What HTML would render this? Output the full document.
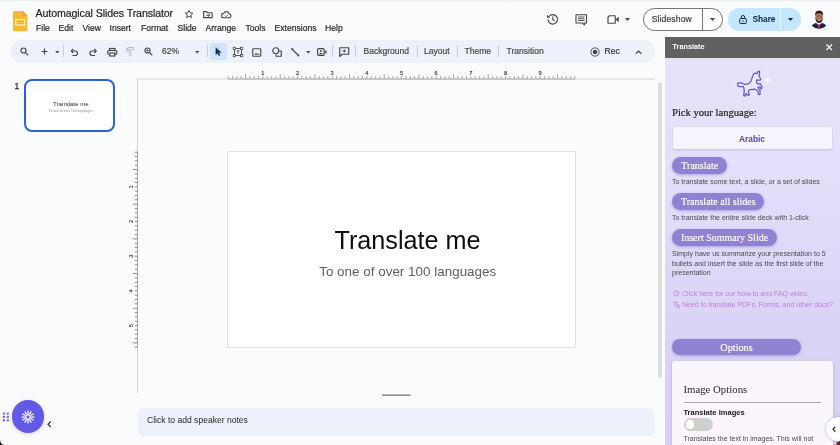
<!DOCTYPE html>
<html lang="en">
<head>
<meta charset="utf-8">
<title>Automagical Slides Translator - Google Slides</title>
<style>
*{box-sizing:border-box;margin:0;padding:0}
html,body{width:840px;height:445px;overflow:hidden}
body{background:#f9fbfd;font-family:"Liberation Sans",Arial,sans-serif;color:#1f1f1f;position:relative}
.abs{position:absolute}
.t{position:absolute;white-space:nowrap;line-height:1}
svg{position:absolute;overflow:visible}
#topband{left:0;top:0;width:840px;height:2px;background:linear-gradient(180deg,#f1f2f4 0,#f3f4f6 70%,#f7f8fa 100%)}
#topband2{left:0;top:5px;width:840px;height:3px;background:linear-gradient(180deg,#f9fbfd 0,#fdfdfe 50%,#f9fbfd 100%)}
/* header */
#doctitle{left:35.600px;top:8.200px;font-size:10.620px;color:#1f1f1f;letter-spacing:-0.100px;-webkit-text-stroke:.2px #1f1f1f}
.menu{top:23.600px;font-size:8.600px;color:#1f1f1f;-webkit-text-stroke:.18px #1f1f1f}
/* toolbar */
#toolbar{left:10px;top:40px;width:645px;height:22.5px;border-radius:12px;background:#edf2fa}
.sep{position:absolute;top:45px;width:1px;height:12px;background:#c9ccd1}
.tb{top:47px;font-size:8.550px;color:#444746;-webkit-text-stroke:.18px #444746}
/* filmstrip */
#thumb{left:24px;top:78.600px;width:91px;height:53.600px;border:2px solid #2f60d8;border-radius:8px;background:#fff}
/* canvas */
#slide{left:227px;top:151px;width:349px;height:197px;background:#fff;border:1px solid #e0e2e6}
#notes{left:137.700px;top:408px;width:517.300px;height:28px;border-radius:5px;background:#edf2fa}
/* sidebar */
#sb{left:665px;top:37px;width:175px;height:408px;background:linear-gradient(180deg,#e8e4fc 0%,#e3defa 35%,#dad4f6 70%,#d8d1f5 100%)}
#sbhead{left:665px;top:37px;width:175px;height:20.500px;background:#616161}
.serif{font-family:"Liberation Serif","DejaVu Serif",serif}
.pill{position:absolute;background:#9181d3;border-radius:10px;color:#fff;box-shadow:0 1px 3px rgba(80,60,160,.35)}
.desc{font-size:7.030px;color:#4a4a4a;line-height:9.270px;white-space:nowrap;position:absolute}
.lnk{font-size:7.030px;color:#c17be2;white-space:nowrap;position:absolute;line-height:1}
</style>
</head>
<body>
<div id="root" style="position:absolute;left:0;top:0;width:840px;height:445px;will-change:transform">
<div class="abs" id="topband"></div>
<div class="abs" id="topband2"></div>

<!-- Slides logo -->
<svg style="left:12.6px;top:10.8px" width="14.4" height="20.2" viewBox="0 0 14.4 20.2">
  <path d="M1.4 0H9.6L14.4 4.8V18.8Q14.4 20.2 13 20.2H1.4Q0 20.2 0 18.8V1.4Q0 0 1.4 0Z" fill="#f5ba2e"/>
  <path d="M9.6 0L14.4 4.8H10.8Q9.6 4.8 9.6 3.6Z" fill="#f29a1f"/>
  <rect x="2.9" y="8.6" width="8.6" height="5.4" fill="none" stroke="#fff" stroke-width="1"/>
</svg>

<div class="t" id="doctitle">Automagical Slides Translator</div>

<!-- title icons -->
<svg style="left:184px;top:8.700px" width="10" height="10" viewBox="0 0 24 24"><path d="M12 3.2l2.7 6 6.5.6-4.9 4.3 1.5 6.4L12 17.1l-5.8 3.4 1.5-6.4-4.9-4.3 6.5-.6z" fill="none" stroke="#444746" stroke-width="2.300" stroke-linejoin="round"/></svg>
<svg style="left:203px;top:11px" width="10" height="8" viewBox="0 0 10 8"><path d="M.6 .6h2.900l1 1.100h4.700v4.900H.6z" fill="none" stroke="#444746" stroke-width="1.100" stroke-linejoin="round"/><path d="M3.200 4.300h3.400M5.400 2.900l1.400 1.400-1.400 1.400" fill="none" stroke="#444746" stroke-width=".95"/></svg>
<svg style="left:221px;top:11px" width="11" height="7.500" viewBox="0 0 11 7.500"><path d="M2.900 6.800a2.200 2.200 0 0 1-.2-4.400A2.900 2.900 0 0 1 8.200 2.900 2 2 0 0 1 8.500 6.800z" fill="none" stroke="#444746" stroke-width="1.100" stroke-linejoin="round"/><path d="M4 4.600l1 1 2-2" fill="none" stroke="#444746" stroke-width=".9"/></svg>

<!-- menus -->
<div class="t menu" style="left:36px">File</div>
<div class="t menu" style="left:58.5px">Edit</div>
<div class="t menu" style="left:82.500px">View</div>
<div class="t menu" style="left:109.500px">Insert</div>
<div class="t menu" style="left:141px">Format</div>
<div class="t menu" style="left:177.500px">Slide</div>
<div class="t menu" style="left:205.500px">Arrange</div>
<div class="t menu" style="left:245.500px">Tools</div>
<div class="t menu" style="left:274.500px">Extensions</div>
<div class="t menu" style="left:325px">Help</div>

<!-- right header icons -->
<svg style="left:545.5px;top:13px" width="13" height="12" viewBox="0 0 26 24"><path d="M5.500 7.500A9.500 9.500 0 1 1 4 13" fill="none" stroke="#444746" stroke-width="2.300"/><path d="M2 3.500v6h6z" fill="#444746"/><path d="M13.500 7v6l4 2.500" fill="none" stroke="#444746" stroke-width="2.200"/></svg>
<svg style="left:574.500px;top:13.500px" width="12.500" height="11.500" viewBox="0 0 25 23"><path d="M2 1.500h21v16.500h-4v4l-4-4H2z" fill="none" stroke="#444746" stroke-width="2.200" stroke-linejoin="round"/><path d="M6 6h13M6 9.500h13M6 13h13" stroke="#444746" stroke-width="1.800"/></svg>
<svg style="left:606.500px;top:15px" width="12.500" height="9" viewBox="0 0 25 18"><path d="M5 1.500h11.500v15H2V4.500z" fill="none" stroke="#444746" stroke-width="2.300" stroke-linejoin="round"/><path d="M17 9l6.500-5.500v11z" fill="#444746"/></svg>
<svg style="left:624.500px;top:17.500px" width="5" height="3" viewBox="0 0 10 6"><path d="M0 0h10L5 6z" fill="#444746"/></svg>

<!-- Slideshow button -->
<div class="abs" style="left:642.500px;top:7.500px;width:80px;height:23.500px;border:1px solid #747775;border-radius:12px;background:#fdfdfe"></div>
<div class="abs" style="left:702px;top:8px;width:1px;height:22.500px;background:#747775"></div>
<div class="t" style="left:651.700px;top:14.500px;font-size:8.650px;color:#3c3f3e;letter-spacing:.100px;-webkit-text-stroke:.2px #3c3f3e">Slideshow</div>
<svg style="left:709.500px;top:17.500px" width="5" height="3" viewBox="0 0 10 6"><path d="M0 0h10L5 6z" fill="#444746"/></svg>

<!-- Share button -->
<div class="abs" style="left:728px;top:7.500px;width:72.500px;height:23.500px;border-radius:12px;background:#c2e7ff"></div>
<div class="abs" style="left:780px;top:7.500px;width:1px;height:23.500px;background:#e3f3ff"></div>
<svg style="left:739px;top:14.500px" width="8" height="9" viewBox="0 0 16 18"><rect x="1.500" y="7" width="13" height="10" rx="1.500" fill="none" stroke="#1f2a37" stroke-width="2"/><path d="M4.500 7V4.500a3.500 3.500 0 0 1 7 0V7" fill="none" stroke="#1f2a37" stroke-width="2"/><circle cx="8" cy="12" r="1.500" fill="#1f2a37"/></svg>
<div class="t" style="left:752.500px;top:14.600px;font-size:8.350px;font-weight:bold;color:#0b2540;letter-spacing:-.050px">Share</div>
<svg style="left:788px;top:17.500px" width="5" height="3" viewBox="0 0 10 6"><path d="M0 0h10L5 6z" fill="#0b2540"/></svg>

<!-- avatar -->
<svg style="left:800px;top:4px" width="40" height="30" viewBox="0 0 593 445">
  <defs><clipPath id="avc"><circle cx="282" cy="215" r="152"/></clipPath></defs>
  <g clip-path="url(#avc)">
    <circle cx="282" cy="215" r="152" fill="#fbfbfd"/>
    <path d="M150 400Q160 300 235 280L282 300 330 280Q400 300 415 400Z" fill="#1b234f"/>
    <path d="M250 283L282 330 316 283 300 275H265Z" fill="#eef0f6"/>
    <path d="M272 300h22l6 75h-34z" fill="#c8232f"/>
    <ellipse cx="283" cy="195" rx="56" ry="82" fill="#b07a58"/>
    <path d="M224 185Q215 95 283 95T343 185Q335 140 283 138T224 185Z" fill="#2a1d1a"/>
    <path d="M228 200Q232 280 283 282T338 200Q325 245 283 243T228 200Z" fill="#3b2721"/>
    <path d="M258 236Q283 262 308 236Q283 246 258 236Z" fill="#fff"/>
    <path d="M250 178h24M292 178h24" stroke="#2a1d1a" stroke-width="9"/><circle cx="262" cy="194" r="6" fill="#2a1d1a"/><circle cx="304" cy="194" r="6" fill="#2a1d1a"/>
  </g>
</svg>

<!-- toolbar -->
<div class="abs" id="toolbar"></div>
<div class="abs" style="left:210px;top:42.500px;width:17px;height:17.500px;border-radius:3px;background:#d3e3fd"></div>
<!-- search -->
<svg style="left:20.200px;top:46.500px" width="9" height="9" viewBox="0 0 18 18"><circle cx="7" cy="7" r="5" fill="none" stroke="#444746" stroke-width="2.300"/><path d="M10.800 10.800L16.500 16.500" stroke="#444746" stroke-width="2.200"/></svg>
<!-- plus -->
<svg style="left:41px;top:47.500px" width="7" height="7" viewBox="0 0 14 14"><path d="M7 1v12M1 7h12" stroke="#444746" stroke-width="2.300"/></svg>
<svg style="left:55px;top:50.500px" width="4.500" height="2.500" viewBox="0 0 10 6"><path d="M0 0h10L5 6z" fill="#444746"/></svg>
<div class="sep" style="left:63px"></div>
<!-- undo -->
<svg style="left:70.300px;top:47.500px" width="8.500" height="8.500" viewBox="0 0 17 17"><path d="M3 6h7.500a4.500 4.500 0 0 1 0 9H5" fill="none" stroke="#444746" stroke-width="2.300"/><path d="M6.500 2L2.500 6l4 4" fill="none" stroke="#444746" stroke-width="2.300"/></svg>
<!-- redo -->
<svg style="left:88.500px;top:47.500px" width="8.500" height="8.500" viewBox="0 0 17 17"><path d="M14 6H6.500a4.500 4.500 0 0 0 0 9H12" fill="none" stroke="#444746" stroke-width="2.300"/><path d="M10.500 2l4 4-4 4" fill="none" stroke="#444746" stroke-width="2.300"/></svg>
<!-- print -->
<svg style="left:106.500px;top:47.500px" width="10.500" height="8.500" viewBox="0 0 21 17"><rect x="5" y="1" width="11" height="4" fill="none" stroke="#444746" stroke-width="2.300"/><rect x="1.500" y="5" width="18" height="7.500" rx="2" fill="none" stroke="#444746" stroke-width="2.300"/><rect x="5.500" y="10" width="10" height="6" fill="#edf2fa" stroke="#444746" stroke-width="2.300"/></svg>
<!-- paint roller disabled -->
<svg style="left:126px;top:47px" width="8.500" height="9.500" viewBox="0 0 17 19"><rect x="3.500" y="1" width="12" height="4.500" rx="1" fill="none" stroke="#b4b7bb" stroke-width="2"/><path d="M3.500 3.200H1.500v5.500h7v3" fill="none" stroke="#b4b7bb" stroke-width="1.800"/><rect x="7" y="11.500" width="3" height="6.500" rx="1" fill="none" stroke="#b4b7bb" stroke-width="1.600"/></svg>
<!-- zoom -->
<svg style="left:144px;top:46.500px" width="9" height="9" viewBox="0 0 18 18"><circle cx="7" cy="7" r="5" fill="none" stroke="#444746" stroke-width="2.300"/><path d="M10.800 10.800L16.500 16.500" stroke="#444746" stroke-width="2.200"/><path d="M7 4.500v5M4.500 7h5" stroke="#444746" stroke-width="1.500"/></svg>
<div class="t tb" style="left:162px">62%</div>
<svg style="left:194.500px;top:50.500px" width="4.500" height="2.500" viewBox="0 0 10 6"><path d="M0 0h10L5 6z" fill="#444746"/></svg>
<div class="sep" style="left:207px"></div>
<!-- cursor -->
<svg style="left:215.300px;top:47.300px" width="6.900" height="9.500" viewBox="0 0 16 22"><path d="M2 1.500V17.500l4.200-3.800 2.800 6.300 2.500-1.100-2.800-6.200h5.800z" fill="#0b2a66" stroke="#0b2a66" stroke-width="1" stroke-linejoin="round"/></svg>
<!-- textbox -->
<svg style="left:232.500px;top:47px" width="10" height="10" viewBox="0 0 20 20"><rect x="3" y="3" width="14" height="14" fill="none" stroke="#444746" stroke-width="1.800"/><rect x="0.500" y="0.500" width="4.500" height="4.500" fill="#edf2fa" stroke="#444746" stroke-width="1.500"/><rect x="15" y="0.500" width="4.500" height="4.500" fill="#edf2fa" stroke="#444746" stroke-width="1.500"/><rect x="0.500" y="15" width="4.500" height="4.500" fill="#edf2fa" stroke="#444746" stroke-width="1.500"/><rect x="15" y="15" width="4.500" height="4.500" fill="#edf2fa" stroke="#444746" stroke-width="1.500"/><path d="M7 7.500h6M10 7.500v6" stroke="#444746" stroke-width="1.800"/></svg>
<!-- image -->
<svg style="left:252px;top:47.500px" width="9.500" height="9" viewBox="0 0 19 18"><rect x="1.500" y="1.500" width="16" height="15" rx="1.500" fill="none" stroke="#444746" stroke-width="2.300"/><path d="M4.500 13.500l3.500-4 2.500 3 2-2 2.500 3z" fill="#444746"/></svg>
<!-- shapes -->
<svg style="left:271.500px;top:47px" width="10" height="10" viewBox="0 0 20 20"><circle cx="7.500" cy="7.500" r="6" fill="none" stroke="#444746" stroke-width="2.300"/><path d="M14.500 8H18.500V18.500H8V14.800" fill="none" stroke="#444746" stroke-width="2.300"/></svg>
<!-- line -->
<svg style="left:291px;top:47.500px" width="8.500" height="8.500" viewBox="0 0 17 17"><path d="M2 2L15 15" stroke="#444746" stroke-width="2.600"/><circle cx="2.200" cy="2.200" r="2" fill="#444746"/><circle cx="14.800" cy="14.800" r="2" fill="#444746"/></svg>
<svg style="left:306px;top:50.500px" width="4.500" height="2.500" viewBox="0 0 10 6"><path d="M0 0h10L5 6z" fill="#444746"/></svg>
<!-- video speaker -->
<svg style="left:317px;top:48px" width="10" height="8" viewBox="0 0 20 16"><rect x="1.200" y="1.200" width="13" height="13.600" rx="2" fill="none" stroke="#444746" stroke-width="2.300"/><path d="M14.500 8L19 4v8z" fill="#444746"/><circle cx="7.700" cy="6" r="1.800" fill="#444746"/><path d="M4 12.300q0-3 3.700-3t3.700 3z" fill="#444746"/></svg>
<div class="sep" style="left:332.200px"></div>
<!-- add comment -->
<svg style="left:339px;top:47px" width="10.500" height="10" viewBox="0 0 21 20"><path d="M1.500 1.500h18v13h-13l-5 4.500z" fill="none" stroke="#444746" stroke-width="2.300" stroke-linejoin="round"/><path d="M10.500 4.500v7M7 8h7" stroke="#444746" stroke-width="1.800"/></svg>
<div class="sep" style="left:355px"></div>
<div class="t tb" style="left:363.500px">Background</div>
<div class="sep" style="left:417px"></div>
<div class="t tb" style="left:424px">Layout</div>
<div class="sep" style="left:456.500px"></div>
<div class="t tb" style="left:464.500px">Theme</div>
<div class="sep" style="left:498px"></div>
<div class="t tb" style="left:506.500px">Transition</div>
<!-- Rec -->
<svg style="left:589.500px;top:46.500px" width="10" height="10" viewBox="0 0 20 20"><circle cx="10" cy="10" r="8.200" fill="none" stroke="#444746" stroke-width="1.800"/><circle cx="10" cy="10" r="4.600" fill="#444746"/></svg>
<div class="t tb" style="left:604.500px;color:#1f1f1f">Rec</div>
<svg style="left:635px;top:49.500px" width="7" height="4.500" viewBox="0 0 14 9"><path d="M1.500 7.500L7 2l5.500 5.500" fill="none" stroke="#444746" stroke-width="2.300"/></svg>

<!-- filmstrip -->
<div class="t" style="left:14.500px;top:81.600px;font-size:8.400px;color:#1f1f1f;-webkit-text-stroke:.25px #1f1f1f">1</div>
<div class="abs" id="thumb"></div>
<div class="t" style="left:52.900px;top:100.800px;font-size:6.200px;color:#2a2a2a">Translate me</div>
<div class="t" style="left:48.800px;top:109.900px;font-size:3.350px;color:#8c8c8c">To one of over 100 languages</div>

<!-- rulers + canvas -->
<svg style="left:0;top:0" width="840" height="100" viewBox="0 0 840 100"><path d="M137 79H655" stroke="#d3d6da" stroke-width="1.100"/></svg>
<div class="abs" style="left:137px;top:79px;width:1px;height:314px;background:#d0d3d7"></div>
<svg style="left:0;top:0" width="840" height="445" viewBox="0 0 840 445"><path d="M228.20 78.700v-2.6M232.53 78.700v-2.6M236.87 78.700v-2.6M241.20 78.700v-2.6M245.53 78.700v-4.6M249.87 78.700v-2.6M254.20 78.700v-2.6M258.54 78.700v-2.6M262.87 78.700v-2.6M267.20 78.700v-2.6M271.54 78.700v-2.6M275.87 78.700v-2.6M280.20 78.700v-4.6M284.54 78.700v-2.6M288.87 78.700v-2.6M293.21 78.700v-2.6M297.54 78.700v-2.6M301.87 78.700v-2.6M306.21 78.700v-2.6M310.54 78.700v-2.6M314.88 78.700v-4.6M319.21 78.700v-2.6M323.54 78.700v-2.6M327.88 78.700v-2.6M332.21 78.700v-2.6M336.54 78.700v-2.6M340.88 78.700v-2.6M345.21 78.700v-2.6M349.54 78.700v-4.6M353.88 78.700v-2.6M358.21 78.700v-2.6M362.55 78.700v-2.6M366.88 78.700v-2.6M371.21 78.700v-2.6M375.55 78.700v-2.6M379.88 78.700v-2.6M384.22 78.700v-4.6M388.55 78.700v-2.6M392.88 78.700v-2.6M397.22 78.700v-2.6M401.55 78.700v-2.6M405.88 78.700v-2.6M410.22 78.700v-2.6M414.55 78.700v-2.6M418.88 78.700v-4.6M423.22 78.700v-2.6M427.55 78.700v-2.6M431.89 78.700v-2.6M436.22 78.700v-2.6M440.55 78.700v-2.6M444.89 78.700v-2.6M449.22 78.700v-2.6M453.56 78.700v-4.6M457.89 78.700v-2.6M462.22 78.700v-2.6M466.56 78.700v-2.6M470.89 78.700v-2.6M475.22 78.700v-2.6M479.56 78.700v-2.6M483.89 78.700v-2.6M488.23 78.700v-4.6M492.56 78.700v-2.6M496.89 78.700v-2.6M501.23 78.700v-2.6M505.56 78.700v-2.6M509.89 78.700v-2.6M514.23 78.700v-2.6M518.56 78.700v-2.6M522.89 78.700v-4.6M527.23 78.700v-2.6M531.56 78.700v-2.6M535.90 78.700v-2.6M540.23 78.700v-2.6M544.56 78.700v-2.6M548.90 78.700v-2.6M553.23 78.700v-2.6M557.57 78.700v-4.6M561.90 78.700v-2.6M566.23 78.700v-2.6M570.57 78.700v-2.6M574.90 78.700v-2.6" stroke="#80868b" stroke-width=".7" fill="none"/><path d="M228 79H575" stroke="#a4a9ae" stroke-width="1.100"/><path d="M137.500 152V347.500" stroke="#a4a9ae" stroke-width="1"/><path d="M137.500 152.20h-2.6M137.500 156.53h-2.6M137.500 160.87h-2.6M137.500 165.20h-2.6M137.500 169.53h-4.6M137.500 173.87h-2.6M137.500 178.20h-2.6M137.500 182.54h-2.6M137.500 186.87h-2.6M137.500 191.20h-2.6M137.500 195.54h-2.6M137.500 199.87h-2.6M137.500 204.20h-4.6M137.500 208.54h-2.6M137.500 212.87h-2.6M137.500 217.21h-2.6M137.500 221.54h-2.6M137.500 225.87h-2.6M137.500 230.21h-2.6M137.500 234.54h-2.6M137.500 238.88h-4.6M137.500 243.21h-2.6M137.500 247.54h-2.6M137.500 251.88h-2.6M137.500 256.21h-2.6M137.500 260.54h-2.6M137.500 264.88h-2.6M137.500 269.21h-2.6M137.500 273.54h-4.6M137.500 277.88h-2.6M137.500 282.21h-2.6M137.500 286.55h-2.6M137.500 290.88h-2.6M137.500 295.21h-2.6M137.500 299.55h-2.6M137.500 303.88h-2.6M137.500 308.22h-4.6M137.500 312.55h-2.6M137.500 316.88h-2.6M137.500 321.22h-2.6M137.500 325.55h-2.6M137.500 329.88h-2.6M137.500 334.22h-2.6M137.500 338.55h-2.6M137.500 342.88h-4.6M137.500 347.22h-2.6" stroke="#767c82" stroke-width=".85" fill="none"/><g font-family="Liberation Sans, Arial, sans-serif" font-size="5.700" fill="#2f3336" stroke="#2f3336" stroke-width=".12"><text x="262.9" y="75" text-anchor="middle">1</text><text x="297.5" y="75" text-anchor="middle">2</text><text x="332.2" y="75" text-anchor="middle">3</text><text x="366.9" y="75" text-anchor="middle">4</text><text x="401.6" y="75" text-anchor="middle">5</text><text x="436.2" y="75" text-anchor="middle">6</text><text x="470.9" y="75" text-anchor="middle">7</text><text x="505.6" y="75" text-anchor="middle">8</text><text x="540.2" y="75" text-anchor="middle">9</text><text transform="translate(133 186.9) rotate(-90)" text-anchor="middle">1</text><text transform="translate(133 221.5) rotate(-90)" text-anchor="middle">2</text><text transform="translate(133 256.2) rotate(-90)" text-anchor="middle">3</text><text transform="translate(133 290.9) rotate(-90)" text-anchor="middle">4</text><text transform="translate(133 325.6) rotate(-90)" text-anchor="middle">5</text></g></svg>

<div class="abs" id="slide"></div>
<div class="t" style="left:334.500px;top:227.600px;font-size:25.200px;color:#0d0d0d">Translate me</div>
<div class="t" style="left:319.200px;top:265.100px;font-size:13.450px;color:#5f5f5f">To one of over 100 languages</div>

<!-- scrollbar -->
<div class="abs" style="left:657.500px;top:82px;width:4px;height:296px;border-radius:2px;background:#dadce0"></div>

<!-- notes -->
<svg style="left:0;top:380px" width="840" height="30" viewBox="0 380 840 30"><path d="M382.600 395.200H410.200" stroke="#6e7276" stroke-width="1.200" stroke-linecap="round"/></svg>
<div class="abs" id="notes"></div>
<div class="t" style="left:147px;top:415.700px;font-size:8.570px;color:#1f1f1f">Click to add speaker notes</div>

<!-- bottom-left floating -->
<svg style="left:0;top:0" width="20" height="445" viewBox="0 0 20 445"><g fill="#6a62ee"><rect x="2.8" y="412.4" width="2.200" height="2.200" rx=".6"/><rect x="2.8" y="415.8" width="2.200" height="2.200" rx=".6"/><rect x="2.8" y="419.2" width="2.200" height="2.200" rx=".6"/><rect x="6.7" y="412.4" width="2.200" height="2.200" rx=".6"/><rect x="6.7" y="415.8" width="2.200" height="2.200" rx=".6"/><rect x="6.7" y="419.2" width="2.200" height="2.200" rx=".6"/></g></svg>
<div class="abs" style="left:11.800px;top:400.400px;width:32.300px;height:32.500px;border-radius:50%;background:#625ae6;box-shadow:0 1px 4px rgba(60,50,160,.18)"></div>
<svg style="left:28.200px;top:416.800px" width="1" height="1" viewBox="0 0 1 1"><path d="M0.00 -3.10L0.00 -6.50M1.55 -2.68L3.25 -5.63M2.68 -1.55L5.63 -3.25M3.10 -0.00L6.50 -0.00M2.68 1.55L5.63 3.25M1.55 2.68L3.25 5.63M0.00 3.10L0.00 6.50M-1.55 2.68L-3.25 5.63M-2.68 1.55L-5.63 3.25M-3.10 0.00L-6.50 0.00M-2.68 -1.55L-5.63 -3.25M-1.55 -2.68L-3.25 -5.63" stroke="#fff" stroke-width="1.250" stroke-linecap="butt" fill="none"/><circle r="2.300" fill="none" stroke="#fff" stroke-width="1.300"/></svg>
<svg style="left:46.800px;top:421px" width="4.500" height="6.500" viewBox="0 0 9 13"><path d="M7.500 1L2 6.500l5.500 5.500" fill="none" stroke="#2b2b2b" stroke-width="2.300"/></svg>
<svg style="left:0;top:438px" width="7" height="7" viewBox="0 0 7 7"><path d="M0 1.500Q.3 7 5 7H0Z" fill="#0a0a0a"/></svg>

<!-- sidebar -->
<div class="abs" id="sb"></div>
<div class="abs" id="sbhead"></div>
<div class="t" style="left:672.500px;top:43.300px;font-size:7.300px;font-weight:bold;color:#fff">Translate</div>
<svg style="left:826px;top:44px" width="6.500" height="6.500" viewBox="0 0 13 13"><path d="M1 1l11 11M12 1L1 12" stroke="#fff" stroke-width="2.200"/></svg>

<!-- unicorn -->
<svg style="left:0;top:0" width="840" height="445" viewBox="0 0 840 445">
  <path d="M737.55 83.51L739.15 82.75L741.79 82.94L744.34 84.45L748.58 83.89L750.94 81.34L752.36 77.09L753.77 73.79L755.38 73.13L756.89 73.70L758.21 71.43L759.53 71.25L759.53 74.08L758.96 76.15L760.85 78.98L760.09 80.11L758.02 80.11L756.89 79.74L756.32 82.00L757.55 83.89L760.47 83.89L762.17 87.28L761.23 88.98L759.53 86.72L757.83 87.28L760.09 90.30L759.91 94.55L758.21 94.26L758.02 91.06L755.19 89.17L749.72 89.55L748.21 91.43L749.34 95.02L747.64 95.21L746.13 93.51L745.09 96.15L743.68 95.58L744.34 90.30L743.49 86.72L740.66 86.72L738.21 86.34Z" fill="#ebe9fc" stroke="#6657c2" stroke-width="1.250" stroke-linejoin="round"/>
  <path d="M767.9 76.4L768.692 79.208L771.5 80L768.692 80.792L767.9 83.6L767.108 80.792L764.3 80L767.108 79.208Z" fill="#ffffff"/>
  <path d="M734 85L734.44 86.56L736 87L734.44 87.44L734 89L733.56 87.44L732 87L733.56 86.56Z" fill="#efecfd"/>
</svg>

<div class="t serif" style="left:672px;top:108.200px;font-size:10.600px;color:#1c1c1c;-webkit-text-stroke:.2px #1c1c1c">Pick your language:</div>
<div class="abs" style="left:672.500px;top:127.200px;width:159.800px;height:22.300px;border-radius:2px;background:#f6f4fd;box-shadow:0 1px 2px rgba(90,70,170,.25)"></div>
<div class="t" style="left:672px;width:160px;text-align:center;top:135px;font-size:8.400px;font-weight:bold;color:#5844ae">Arabic</div>

<div class="pill" style="left:672px;top:157px;width:55.300px;height:17px"></div>
<div class="t serif" style="left:672px;width:55.500px;text-align:center;top:160.800px;font-size:10px;color:#fff;-webkit-text-stroke:.15px #fff">Translate</div>
<div class="desc" style="left:672px;top:177.300px">To translate some text, a slide, or a set of slides</div>

<div class="pill" style="left:672px;top:193.200px;width:92.300px;height:17px"></div>
<div class="t serif" style="left:672px;width:92.500px;text-align:center;top:196.800px;font-size:10px;color:#fff;-webkit-text-stroke:.15px #fff">Translate all slides</div>
<div class="desc" style="left:672px;top:213.300px">To translate the entire slide deck with 1-click</div>

<div class="pill" style="left:672px;top:229.200px;width:105px;height:17px"></div>
<div class="t serif" style="left:672px;width:105px;text-align:center;top:232.800px;font-size:10px;color:#fff;-webkit-text-stroke:.15px #fff">Insert Summary Slide</div>
<div class="desc" style="left:672px;top:249.300px">Simply have us summarize your presentation to 5<br>bullets and insert the slide as the first slide of the<br>presentation</div>

<svg style="left:672.800px;top:290.300px" width="6.500" height="6.500" viewBox="0 0 13 13"><circle cx="6.500" cy="6.500" r="5.500" fill="none" stroke="#c17be2" stroke-width="1.300"/><path d="M4.800 5.200q0-1.700 1.700-1.700t1.700 1.500q0 1-1.700 1.800v.8" fill="none" stroke="#c17be2" stroke-width="1.200"/><circle cx="6.500" cy="9.600" r=".8" fill="#c17be2"/></svg>
<div class="lnk" style="left:682px;top:289.700px">Click here for our how-to and FAQ video</div>
<svg style="left:672.500px;top:300.500px" width="7.500" height="7.500" viewBox="0 0 15 15"><path d="M1 2.500h8M5 1v1.500M7.500 2.500Q6.500 6.500 1.500 9.500M3 5q1.500 3 4.500 4.500" fill="none" stroke="#c17be2" stroke-width="1.300"/><path d="M7.500 14l3-8 3 8M8.600 11.500h3.800" fill="none" stroke="#c17be2" stroke-width="1.300"/></svg>
<div class="lnk" style="left:682px;top:300.500px">Need to translate PDFs, Forms, and other docs?</div>

<div class="pill" style="left:672px;top:338.600px;width:129.200px;height:16.800px"></div>
<div class="t serif" style="left:672px;width:129px;text-align:center;top:343px;font-size:10.200px;color:#fff;-webkit-text-stroke:.15px #fff">Options</div>

<div class="abs" style="left:672px;top:361.200px;width:161px;height:90px;border-radius:3px;background:#fbf5fd;box-shadow:0 1px 3px rgba(90,70,170,.25)"></div>
<div class="t serif" style="left:683.400px;top:384.200px;font-size:10.800px;color:#2a2a2a">Image Options</div>
<div class="abs" style="left:683.500px;top:401.500px;width:137.500px;height:1px;background:#a6a6a6"></div>
<div class="t" style="left:683.400px;top:409.300px;font-size:7.550px;font-weight:bold;color:#1a1a1a">Translate Images</div>
<div class="abs" style="left:683.500px;top:417.700px;width:29.200px;height:13px;border-radius:7px;background:#cfcfcf"></div>
<div class="abs" style="left:685.700px;top:419.800px;width:8.800px;height:8.800px;border-radius:50%;background:#fff"></div>
<div class="desc" style="left:683.400px;top:434.300px">Translates the text in images. This will not</div>

<!-- sidebar collapse knob -->
<div class="abs" style="left:826px;top:417px;width:24px;height:24px;border-radius:50%;background:#fff;box-shadow:0 0 3px rgba(0,0,0,.3)"></div>
<svg style="left:832px;top:425.500px" width="4" height="6.500" viewBox="0 0 8 13"><path d="M6.500 1.500L2 6.500l4.500 5" fill="none" stroke="#333" stroke-width="2.400"/></svg>
<div class="abs" style="left:835.500px;top:440.500px;width:9px;height:9px;border-radius:50%;background:#74221a"></div>

</div>
</body>
</html>
